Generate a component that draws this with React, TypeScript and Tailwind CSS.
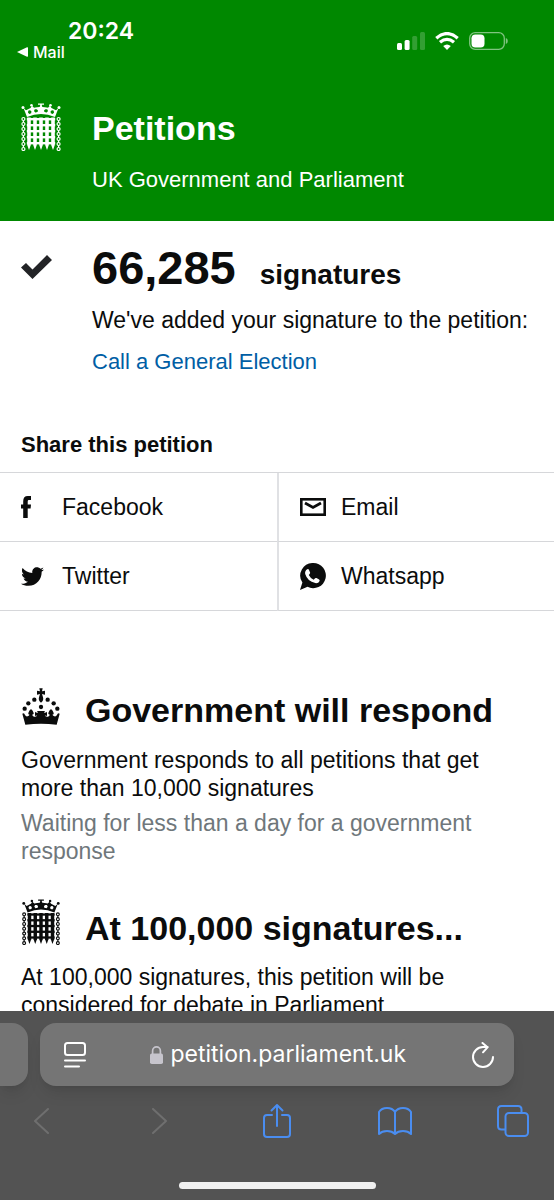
import type { ReactNode } from "react";
import { FaTwitter } from "react-icons/fa";

const chainLinks = [16, 21, 26, 31, 36, 41, 46];
const barColumns = [8, 14, 20, 26, 32];
const barRows = [14, 20, 26, 32, 38];

function Portcullis({ className }: { className: string }) {
  return (
    <svg viewBox="0 0 40 48" className={className} fill="currentColor" aria-hidden="true">
      {/* crown */}
      <path
        fillRule="evenodd"
        d="M2.500 5L5 7.200L7.500 6L9.500 5L11 2.800L13 4.800L16 4.200L18.500 4L20 2L21.500 4L24 4.200L27 4.800L29 2.800L30.500 5L32.500 6L35 7.200L37.500 5L34 14Q20 8 6 14ZM7.500 7.600l-.6 1.800 1.400 1.600 1.900-.7.200-2-1.400-1.100zM13.800 6.300l-.8 1.700 1.200 1.600 2.400-.5.300-1.900-1.300-1zM26.200 6.300l.8 1.700-1.200 1.600-2.400-.5-.3-1.900 1.300-1zM32.500 7.600l.6 1.800-1.400 1.600-1.900-.7-.2-2 1.400-1.100z"
      />
      <path d="M17 .4h6v1.400h-2.200V4h-1.600V1.800H17z" />
      <circle cx="2" cy="4.600" r="1.500" />
      <circle cx="38" cy="4.600" r="1.500" />
      <circle cx="10.500" cy="2.200" r="1.300" />
      <circle cx="29.500" cy="2.200" r="1.300" />
      {/* grille */}
      {barRows.map((y) => (
        <rect key={y} x="5.800" y={y + 1} width="28.400" height="2.400" />
      ))}
      {barColumns.map((x) => (
        <path key={x} d={`M${x - 1.8} 14.500h3.600V42L${x} 47L${x - 1.8} 42z`} />
      ))}
      {/* chains */}
      {chainLinks.map((y) => (
        <g key={y} fill="none" stroke="currentColor" strokeWidth="1.200">
          <circle cx="2.400" cy={y} r="1.500" />
          <circle cx="37.600" cy={y} r="1.500" />
          <path d={`M2.400 ${y + 1.5}v2M37.600 ${y + 1.5}v2`} />
        </g>
      ))}
    </svg>
  );
}

function Crown() {
  return (
    <svg viewBox="30 27 120 114" className="w-10 h-[38px]" fill="currentColor" aria-hidden="true">
      <path d="M85 28h10l-2 9 9-2v12l-9-2 3 10q3 10-6 16q-9-6-6-16l3-10-9 2V35l9 2z" />
      <circle cx="90" cy="84" r="6.500" />
      <circle cx="70" cy="62" r="6.500" />
      <circle cx="52" cy="73" r="6.500" />
      <circle cx="41" cy="89" r="6.500" />
      <circle cx="110" cy="62" r="6.500" />
      <circle cx="128" cy="73" r="6.500" />
      <circle cx="139" cy="89" r="6.500" />
      <path d="M34 104q6-3 8 4 4 7 10 3 4-2 3-5-4 1-3-4 2-8 8-12 6 4 8 12 1 5-4 4-1 6 5 7 6 1 9-3-4-1-6 2V98q3 4 9 3l-3-5h24l-3 5q6 1 9-3v14q-2-3-6-2 3 4 9 3 6-1 5-7-5 1-4-4 2-8 8-12 6 4 8 12 1 5-3 4-1 3 3 5 6 4 10-3 2-7 8-4l-9 33q-47-5-94 0z" />
    </svg>
  );
}

function FacebookIcon() {
  return (
    <svg viewBox="0 0 10 22" className="w-[10px] h-[22px]" fill="currentColor" aria-hidden="true">
      <path d="M2.200 22V12.400H0V8.400h2.200V5.200Q2.200 0 6.800 0H10v4H7.900Q6.700 4 6.700 5.400v3H10l-.4 4H6.700V22z" />
    </svg>
  );
}

function EmailIcon() {
  return (
    <svg viewBox="0 0 26 18" className="w-[26px] h-[18px]" fill="none" stroke="currentColor" aria-hidden="true">
      <rect x="1.300" y="1.300" width="23.400" height="15.400" strokeWidth="2.600" />
      <path d="M5 5l8 4.500L21 5" strokeWidth="2.800" />
    </svg>
  );
}

function WhatsappIcon() {
  return (
    <svg viewBox="0 0 26 27" className="w-[26px] h-[27px]" aria-hidden="true">
      <path
        fill="currentColor"
        d="M13.300 0a12.600 12.600 0 1 1-5.800 23.800L0 27l2.400-7.400A12.600 12.600 0 0 1 13.300 0z"
      />
      <path
        fill="white"
        d="M7.300 6.200q1.100-.5 1.600.5l1.200 2.900q.2.800-.5 1.500l-.8 1q1.600 3.300 4.900 4.700l1.400-1.500q.6-.6 1.400-.2l2.600 1.300q.8.500.5 1.500-1.100 2.600-4.300 2.200-7.900-1.600-10.100-9-.6-3.400 2.100-4.900z"
      />
    </svg>
  );
}

function StatusBar() {
  return (
    <div className="flex justify-between items-start pt-5 pl-[17px] pr-[46px] font-['Inter',sans-serif]">
      <div>
        <div className="pl-[51px] text-[23px] leading-[22px] font-semibold">20:24</div>
        <button className="flex items-center gap-[5px] h-5 text-base font-medium">
          <svg viewBox="0 0 11 10" className="w-[11px] h-[10px]" fill="currentColor" aria-hidden="true">
            <path d="M0 5L10 .3Q11 0 11 1v8q0 1-1 .7z" />
          </svg>
          Mail
        </button>
      </div>
      <div className="flex items-center gap-[10px] pt-3">
        <svg viewBox="0 0 28 18" className="w-7 h-[18px]" fill="currentColor" aria-hidden="true">
          <rect x="0" y="11" width="5" height="7" rx="1.500" />
          <rect x="7.600" y="8" width="5" height="10" rx="1.500" />
          <rect x="15.200" y="4" width="5" height="14" rx="1.500" opacity=".2" />
          <rect x="23" y="0" width="5" height="18" rx="1.500" opacity=".2" />
        </svg>
        <svg viewBox="0 0 24 18" className="w-6 h-[18px]" fill="none" stroke="currentColor" aria-hidden="true">
          <path d="M1.300 6.200Q12-3 22.700 6.200" strokeWidth="3.300" />
          <path d="M5 10.300q7-5.800 14 0" strokeWidth="3.300" />
          <path d="M12 18l-3.800-3.900q3.800-3 7.600 0z" fill="currentColor" stroke="none" />
        </svg>
        <svg viewBox="0 0 39 18" className="w-[39px] h-[18px]" aria-hidden="true">
          <rect x=".7" y=".7" width="34.600" height="16.600" rx="5.500" fill="none" stroke="white" strokeWidth="1.300" opacity=".5" />
          <path d="M36.800 6q2 .6 2 3t-2 3z" fill="white" opacity=".5" />
          <rect x="2.500" y="2.500" width="13" height="13" rx="3.800" fill="white" />
        </svg>
      </div>
    </div>
  );
}

const shareLinks: { name: string; icon: ReactNode }[] = [
  { name: "Facebook", icon: <FacebookIcon /> },
  { name: "Email", icon: <EmailIcon /> },
  { name: "Twitter", icon: <FaTwitter className="size-[23px]" /> },
  { name: "Whatsapp", icon: <WhatsappIcon /> },
];

function ShareLinks() {
  return (
    <section className="pt-[55px]">
      <h2 className="px-[21px] pb-[13px] text-[22px] leading-7 font-bold">Share this petition</h2>
      <ul className="grid grid-cols-2 border-t border-[#d6d7da]">
        {shareLinks.map((link) => (
          <li key={link.name} className="border-b border-[#d6d7da] even:border-l-2 even:border-l-[#e0e1e4]">
            <a href="#" className="flex items-center h-[68px] pl-[21px] text-[23px]">
              <span className="w-[41px]">{link.icon}</span>
              {link.name}
            </a>
          </li>
        ))}
      </ul>
    </section>
  );
}

function BrowserBar() {
  return (
    <footer className="shrink-0 pt-3 pb-[11px] bg-[#535353] text-white font-['Inter',sans-serif]">
      <div className="flex gap-3 pr-10">
        <div className="w-7 h-[63px] rounded-r-2xl bg-[#737373] shadow-lg" />
        <div className="flex flex-1 items-center justify-between h-[63px] pl-6 pr-5 rounded-2xl bg-[#757575] shadow-lg">
          <button aria-label="Page settings">
            <svg viewBox="0 0 22 26" className="w-[22px] h-[26px]" fill="none" stroke="currentColor" strokeWidth="2" strokeLinecap="round" aria-hidden="true">
              <rect x="1" y="1" width="20" height="12" rx="2.500" />
              <path d="M1 18.500h20M1 24.500h14" />
            </svg>
          </button>
          <label className="flex items-center gap-2">
            <svg viewBox="0 0 13 18" className="w-[13px] h-[18px] text-[#c6c4cc]" aria-hidden="true">
              <rect x="0" y="7.500" width="13" height="10.500" rx="1.800" fill="currentColor" />
              <path d="M2.600 8V5a3.900 4.100 0 0 1 7.800 0v3" fill="none" stroke="currentColor" strokeWidth="1.700" />
            </svg>
            <input
              type="text"
              aria-label="Address"
              defaultValue="petition.parliament.uk"
              className="w-[238px] text-[23px] bg-transparent outline-none"
            />
          </label>
          <button aria-label="Reload">
            <svg viewBox="0 0 22 26" className="w-[22px] h-[26px]" fill="none" stroke="currentColor" strokeWidth="2" strokeLinecap="round" strokeLinejoin="round" aria-hidden="true">
              <path d="M21 15a10 10 0 1 1-10-10h4.500" />
              <path d="M10.500 1l5 4.300-4.500 5" />
            </svg>
          </button>
        </div>
      </div>
      <nav className="flex items-center justify-between h-[70px] px-[23px] text-[#4a8df0]">
        <button aria-label="Back" className="flex justify-center w-9 text-[#6f6f6f]">
          <svg viewBox="0 0 15 26" className="w-[15px] h-[26px]" fill="none" stroke="currentColor" strokeWidth="2" strokeLinecap="round" strokeLinejoin="round" aria-hidden="true">
            <path d="M14 1L1 13l13 12" />
          </svg>
        </button>
        <button aria-label="Forward" className="flex justify-center w-9 text-[#6f6f6f]">
          <svg viewBox="0 0 15 26" className="w-[15px] h-[26px]" fill="none" stroke="currentColor" strokeWidth="2" strokeLinecap="round" strokeLinejoin="round" aria-hidden="true">
            <path d="M1 1l13 12L1 25" />
          </svg>
        </button>
        <button aria-label="Share" className="flex justify-center w-9">
          <svg viewBox="0 0 28 36" className="w-7 h-9" fill="none" stroke="currentColor" strokeWidth="2" strokeLinecap="round" strokeLinejoin="round" aria-hidden="true">
            <path d="M9 12H4q-3 0-3 3v16q0 3 3 3h20q3 0 3-3V15q0-3-3-3h-5M14 23V2M8.500 7.500L14 2l5.500 5.500" />
          </svg>
        </button>
        <button aria-label="Bookmarks" className="flex justify-center w-9">
          <svg viewBox="0 0 34 28" className="w-[34px] h-7" fill="none" stroke="currentColor" strokeWidth="2" strokeLinejoin="round" aria-hidden="true">
            <path d="M17 5Q14.500 1 9 1T1 5v22q3-3 8-3t8 3q3-3 8-3t8 3V5q-2.500-4-8-4t-8 4v22" />
          </svg>
        </button>
        <button aria-label="Tabs" className="flex justify-center w-9">
          <svg viewBox="0 0 32 32" className="size-8" fill="none" stroke="currentColor" strokeWidth="2" aria-hidden="true">
            <rect x="8.500" y="8" width="22.500" height="23" rx="3.500" />
            <path d="M8.500 24.500H4.500Q1 24.500 1 21V4.500Q1 1 4.500 1h16.500Q24.500 1 24.500 4.500V8" />
          </svg>
        </button>
      </nav>
      <div className="w-[197px] h-[7px] mt-[26px] mx-auto rounded-full bg-[#f0f0f0]" />
    </footer>
  );
}

export default function App() {
  return (
    <div className="flex flex-col h-screen bg-white text-[#0b0c0c] font-['Liberation_Sans',Arial,sans-serif]">
      <header className="shrink-0 pb-[27px] bg-[#008800] text-white">
        <StatusBar />
        <div className="flex gap-[31px] pt-10 pl-[21px]">
          <Portcullis className="w-10 h-12 mt-[1px]" />
          <div>
            <a href="#" className="block pt-1 text-[34px] leading-[44px] font-bold">
              Petitions
            </a>
            <p className="pt-4 text-[22px] leading-7">UK Government and Parliament</p>
          </div>
        </div>
      </header>

      <main className="flex-1 min-h-0 overflow-hidden">
        <section className="flex pl-[21px] pt-[22px]">
          <svg viewBox="0 0 31 24" className="w-[31px] h-6 mt-3 mr-10" aria-hidden="true">
            <path d="M0 12.500L5 8l6.500 6.500L26 0l5 5-19.500 19z" fill="#222326" />
          </svg>
          <div>
            <h1 className="font-bold leading-[50px]">
              <span className="text-[47px]">66,285</span>
              <span className="ml-6 text-[28px]">signatures</span>
            </h1>
            <p className="pt-[2px] text-[23px] leading-7">We've added your signature to the petition:</p>
            <p className="pt-[14px] text-[22px] leading-7">
              <a href="#" className="text-[#005ea5]">
                Call a General Election
              </a>
            </p>
          </div>
        </section>

        <ShareLinks />

        <section className="px-[21px] pt-[77px] text-[23px] leading-7">
          <h2 className="flex items-start gap-6 text-[34px] leading-[44px] font-bold">
            <Crown />
            Government will respond
          </h2>
          <p className="pt-[14px]">Government responds to all petitions that get more than 10,000 signatures</p>
          <p className="pt-[7px] text-[#6f777b]">Waiting for less than a day for a government response</p>
        </section>

        <section className="px-[21px] pt-[34px] text-[23px] leading-7">
          <h2 className="flex items-start gap-6 text-[34px] leading-[58px] font-bold">
            <Portcullis className="w-10 h-[46px]" />
            At 100,000 signatures...
          </h2>
          <p className="pt-[6px]">At 100,000 signatures, this petition will be considered for debate in Parliament</p>
        </section>
      </main>

      <BrowserBar />
    </div>
  );
}
